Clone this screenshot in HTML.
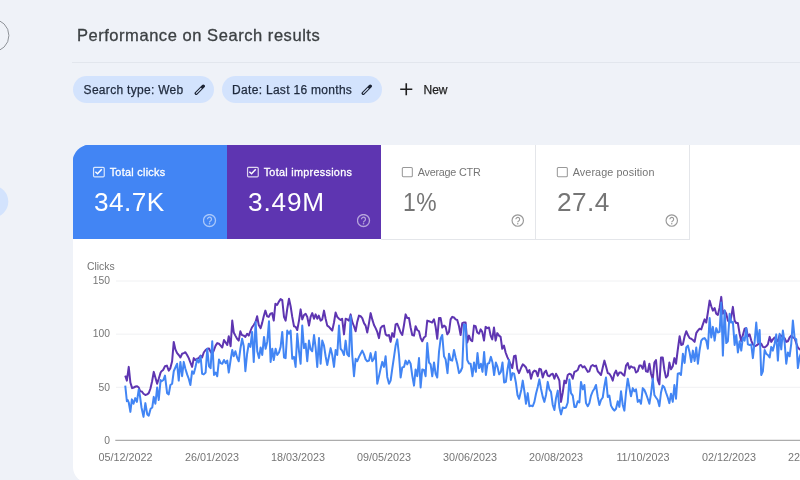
<!DOCTYPE html>
<html><head><meta charset="utf-8">
<style>
*{box-sizing:border-box;margin:0;padding:0}
html,body{width:800px;height:480px;overflow:hidden;background:#eff2f8;font-family:"Liberation Sans",sans-serif;}
.abs{position:absolute}
#title{left:76.9px;top:24.8px;font-size:16.5px;letter-spacing:.55px;color:#3c4043;-webkit-text-stroke:.3px #3c4043;white-space:nowrap;line-height:20px}
#divider{left:72px;top:62px;width:728px;height:1px;background:#e2e6ed}
.chip{top:76px;height:27px;border-radius:14px;background:#d3e3fd;font-size:12px;letter-spacing:.3px;color:#1f2a3d;line-height:27px;white-space:nowrap;-webkit-text-stroke:.25px #1f2a3d}
.chip span{position:absolute;top:1px}
#card{left:72.8px;top:145px;width:760px;height:338.3px;background:#fff;border-radius:16px 0 0 16px;overflow:hidden}
.m{position:absolute;top:0;height:94px;width:154px}
.m .lab{position:absolute;left:36.7px;top:20px;font-size:10.8px;line-height:14px;white-space:nowrap}
.m .val{position:absolute;left:21px;top:41px;font-size:26.2px;letter-spacing:.45px;line-height:32px;white-space:nowrap}
.m svg.cb{position:absolute;left:19px;top:21px}
.m svg.q{position:absolute;left:130px;top:69px}
.w{border-right:1px solid #e4e6ea;border-bottom:1px solid #e4e6ea;height:95px !important;width:155px !important;background:#fff;color:#757575}
.ax{position:absolute;font-size:10.8px;color:#757575;white-space:nowrap;line-height:12px}
#c4 svg.q{left:129px}
#root{position:absolute;left:0;top:0;width:800px;height:480px;will-change:transform}
</style></head><body>
<div id="root">
<div id="title" class="abs">Performance on Search results</div>
<div id="divider" class="abs"></div>
<div class="chip abs" style="left:72.7px;width:141.8px"><span style="left:10.9px">Search type: Web</span>
<svg class="abs" style="left:121.5px;top:8.4px" width="12" height="12" viewBox="0 0 12 12"><path d="M2.2 9.3 L9.3 2.2" stroke="#1b2334" stroke-width="3.3" stroke-linecap="round" fill="none"/><path d="M2.4 9.1 L7.0 4.5" stroke="#d3e3fd" stroke-width="1.2" stroke-linecap="round" fill="none"/></svg></div>
<div class="chip abs" style="left:221.6px;width:160.8px"><span style="left:10.5px">Date: Last 16 months</span>
<svg class="abs" style="left:139.6px;top:8.4px" width="12" height="12" viewBox="0 0 12 12"><path d="M2.2 9.3 L9.3 2.2" stroke="#1b2334" stroke-width="3.3" stroke-linecap="round" fill="none"/><path d="M2.4 9.1 L7.0 4.5" stroke="#d3e3fd" stroke-width="1.2" stroke-linecap="round" fill="none"/></svg></div>
<svg class="abs" style="left:400px;top:83px" width="12.5" height="12.5" viewBox="0 0 12.5 12.5"><path d="M6.25 0.2V12.3M0.2 6.25H12.3" stroke="#1f1f1f" stroke-width="1.6" fill="none"/></svg>
<div class="abs" style="left:423.5px;top:77.1px;font-size:12px;line-height:26.8px;color:#1f1f1f;-webkit-text-stroke:.25px #1f1f1f">New</div>

<div id="card" class="abs">
 <div class="m" style="left:.2px;background:#4285f4;color:#fff;box-shadow:-1px 0 0 #4285f4">
  <svg class="cb" width="14" height="13" viewBox="0 0 14 13"><rect x="1.55" y="1.4" width="10.7" height="9.4" rx="1.1" fill="none" stroke="#fff" stroke-width="1.2" opacity="0.8"/><path d="M3.35 5.7 L5.55 7.7 L9.75 3.2" fill="none" stroke="#fff" stroke-width="1.5"/></svg><div class="lab" style="letter-spacing:.3px;-webkit-text-stroke:.3px #fff">Total clicks</div><div class="val">34.7K</div><svg class="q" width="14" height="14" viewBox="0 0 14 14" opacity="0.55"><circle cx="6.5" cy="6.5" r="6" fill="none" stroke="#fff" stroke-width="1.3"/><path d="M4.5 5.2 a2 2 0 1 1 3.2 1.6 c-.8.5-1.2.9-1.2 1.6" fill="none" stroke="#fff" stroke-width="1.2"/><circle cx="6.5" cy="9.8" r=".8" fill="#fff"/></svg>
 </div>
 <div class="m" style="left:154.2px;background:#5e35b1;color:#fff">
  <svg class="cb" width="14" height="13" viewBox="0 0 14 13"><rect x="1.55" y="1.4" width="10.7" height="9.4" rx="1.1" fill="none" stroke="#fff" stroke-width="1.2" opacity="0.8"/><path d="M3.35 5.7 L5.55 7.7 L9.75 3.2" fill="none" stroke="#fff" stroke-width="1.5"/></svg><div class="lab" style="letter-spacing:.3px;-webkit-text-stroke:.3px #fff">Total impressions</div><div class="val" style="letter-spacing:.85px">3.49M</div><svg class="q" width="14" height="14" viewBox="0 0 14 14" opacity="0.55"><circle cx="6.5" cy="6.5" r="6" fill="none" stroke="#fff" stroke-width="1.3"/><path d="M4.5 5.2 a2 2 0 1 1 3.2 1.6 c-.8.5-1.2.9-1.2 1.6" fill="none" stroke="#fff" stroke-width="1.2"/><circle cx="6.5" cy="9.8" r=".8" fill="#fff"/></svg>
 </div>
 <div class="m w" style="left:308.2px">
  <svg class="cb" width="14" height="13" viewBox="0 0 14 13"><rect x="2.33" y="1.5" width="10" height="9.2" rx="1" fill="none" stroke="#999" stroke-width="1.05"/></svg><div class="lab" style="letter-spacing:-.22px">Average CTR</div><div class="val" style="left:22.2px"><span style="display:inline-block;transform:scaleX(.875);transform-origin:0 0">1%</span></div><svg class="q" width="14" height="14" viewBox="0 0 14 14" opacity="1"><circle cx="6.75" cy="6.5" r="5.7" fill="none" stroke="#999" stroke-width="1.15"/><path d="M4.85 5.3 a1.9 1.9 0 1 1 3.05 1.5 c-.75.5-1.15.85-1.15 1.55" fill="none" stroke="#999" stroke-width="1.1"/><circle cx="6.75" cy="9.7" r=".72" fill="#999"/></svg>
 </div>
 <div class="m w" id="c4" style="left:463.2px;width:154px !important">
  <svg class="cb" width="14" height="13" viewBox="0 0 14 13"><rect x="2.33" y="1.5" width="10" height="9.2" rx="1" fill="none" stroke="#999" stroke-width="1.05"/></svg><div class="lab" style="letter-spacing:.1px">Average position</div><div class="val">27.4</div><svg class="q" width="14" height="14" viewBox="0 0 14 14" opacity="1"><circle cx="6.75" cy="6.5" r="5.7" fill="none" stroke="#999" stroke-width="1.15"/><path d="M4.85 5.3 a1.9 1.9 0 1 1 3.05 1.5 c-.75.5-1.15.85-1.15 1.55" fill="none" stroke="#999" stroke-width="1.1"/><circle cx="6.75" cy="9.7" r=".72" fill="#999"/></svg>
 </div>
</div>

<svg id="chart" class="abs" style="left:0;top:0" width="800" height="480" viewBox="0 0 800 480">
 <circle cx="-7.4" cy="35.5" r="16.3" fill="none" stroke="#8f9399" stroke-width="1"/>
 <rect x="-40" y="185.6" width="48.3" height="32" rx="16" fill="#d3e3fd"/>
 <g stroke="#f0f1f3" stroke-width="1">
  <line x1="116" y1="281" x2="800" y2="281"/><line x1="116" y1="334.15" x2="800" y2="334.15"/><line x1="116" y1="387.3" x2="800" y2="387.3"/>
 </g>
 <line x1="115.3" y1="440.4" x2="800" y2="440.4" stroke="#acacac" stroke-width="1.1"/>
 <polyline id="pp" fill="none" stroke="#5e35b1" stroke-width="2" stroke-linejoin="round" points="125.25,375.62 126.88,380.62 128.75,366.88 130.38,382.5 132.12,388.12 133.75,387.5 135.62,386.5 137.12,386.25 138.75,387.5 140.25,391.25 141.88,391.5 143.5,393.75 145.38,395 147.12,394.38 148.75,393.12 150.38,388.75 152.12,381.25 153.75,371.88 155.38,377.5 157.12,383.75 158.75,378.75 160.62,372.5 161.5,371.25 163.12,370 165,366.25 166.88,365.62 168.75,370.62 170.38,368.12 172.12,361.25 173.75,341.88 175.38,349.38 177.12,353.12 178.75,355 180.38,357.5 182.12,353.75 183.75,353.12 185.38,352.25 187.12,355 188.75,358.12 190.38,362.5 192.12,366.88 193.75,358.12 195.38,360 197.12,358.75 198.75,358.12 200.62,355.62 202.12,357.5 203.75,352.5 205.62,350 207.25,348.75 209,348.5 210.62,351.88 212.25,353.75 214,350 215.62,345.62 217.25,343.12 219,343.75 220.62,345.62 222.25,347.5 224,340 225.62,342.5 227.25,345 228.75,336.25 230.62,346.25 232.25,320.62 233.75,332.5 235.38,335.62 237.12,338.75 238.75,340.62 240.38,331.25 241.88,335 243.75,335.62 245.38,336.88 247.12,333.75 248.75,335.62 250.38,331.25 251.88,327.5 253.75,325 255.62,321.88 257.12,316.25 258.75,325 260.62,328.12 262.12,323.12 263.75,316.25 265.38,310.62 267.12,316.25 268.75,316.88 270.38,313.75 272.12,313.12 273.75,320.62 275.38,303.75 277.12,305 278.75,301.88 280.62,299 282.25,300 284,316.88 285.62,320.62 287.25,308.75 289,298.75 290.62,306.25 292.25,316.88 294,326.25 295.62,326.88 297.25,330 299,320.62 300.62,309.38 302.25,319.38 304,315 305.62,313.75 307.25,316.88 309,325.62 310.62,316.88 312.25,313.12 314,318.75 315.62,314.38 317.25,318.75 318.75,315.62 320.62,320.62 322.25,319.38 324,310.62 325.62,318.75 327.25,325.62 329,326.88 330.62,328.75 332.25,330.62 334,322.5 335.62,312.5 337.25,316.88 339,318.75 340.62,320 342.12,318.75 344,334.38 345.62,318.75 347.25,319.38 349,320.62 350.62,314.38 352.25,321.88 354,326.25 355.62,331.25 357.25,321.88 359,315.62 360.62,316.25 362.25,318.12 364,323.12 365.62,325.62 367.25,332.5 369,323.12 370.62,313.12 372.25,319.38 374,325 375.62,328.12 377.25,331.88 379,338.12 380.62,328.12 382.25,326.25 384,325.62 385.62,334.38 387.25,335.62 389,335 390.62,341.88 392.25,333.12 394,336.88 395.62,324.38 397.25,323.75 399,328.12 400.62,332.5 402.25,335 404,325 405.62,314.38 407.25,318.12 409,318.12 410.62,327.5 412.25,335 414,335.62 415.62,326.25 417.25,330 419,331.25 420.62,338.12 422.25,341.25 424,337.5 425.62,336.25 427.25,320.62 429,321.25 430.62,321.88 432.12,322.5 434,319.38 435.62,326.88 437.25,338.75 439,318.12 440.62,318.12 442.25,327.5 444,325.62 445.62,326.88 447.25,334.38 449,331.88 450.62,319.38 452.25,316.88 454,317.5 455.62,319.38 457.25,320 459,326.25 460.62,335 462.25,323.12 464,322.5 465.62,322.5 467.25,342.5 469,335.62 470.62,340 472.25,341.25 474,325.62 475.62,326.25 477.25,332.5 479,333.75 480.62,329.38 482.25,331.88 484,340.62 485.62,326.88 487.25,328.12 489,327.5 490.62,335.62 492.25,339.38 494,327.5 495.62,340.62 497.25,333.12 499,335.62 500.62,336.88 502.25,348.75 504,345.62 505.62,352.5 507.25,356.88 509,360.62 510.62,364.38 512.25,368.12 514,356.25 515.62,355.62 517.25,368.75 519,373.12 521.25,367.5 522.75,364.38 524.38,365.62 526,367.5 527.75,372.5 529.38,370 531,378.75 532.75,372.5 534.38,370.62 536,371.25 537.75,376.25 539.38,368.75 541,369.38 542.75,377.5 544.38,372.5 546,370.62 547.75,375.62 549.38,376.25 551,374.38 552.75,373.75 554.38,378.75 556,373.75 557.75,376.88 559.38,380.62 561,401.88 562.75,392.5 564.38,380.62 566,383.12 567.75,375 569.38,373.75 571,374.38 572.75,378.75 574.38,371.88 576,371.25 577.75,370 579.38,365.62 581,365 582.75,367.5 584.38,366.25 586,368.75 587.75,371.88 589.38,371.25 591,366.25 592.75,365 594.38,366.25 596,365.62 597.75,371.25 599.38,373.12 601,375 602.75,367.5 604.38,360.62 606,366.25 607.75,373.12 609.38,373.75 611,376.25 612.75,380.62 614.38,373.75 616,370.62 617.75,375.62 619.38,372.5 621,372.5 622.75,374.38 624.38,375.62 626,365.62 627.75,363.12 629.38,368.75 631,366.25 632.75,367.5 634.38,367.5 636,372.5 637.75,371.25 639.38,365.62 641,365.62 642.75,368.75 644.38,361.25 646,371.25 647.75,371.88 649.38,363.75 651,373.75 652.75,379.38 654.38,362.5 656,360 657.75,380 659.38,384.38 661,357.5 662.75,357.5 664.38,370 666,377.5 667.75,375.62 669.38,362.5 671,369.38 672.75,366.25 674.38,358.12 676,363.75 677.75,350 679.62,336.25 681.25,345 682.88,344.38 684.62,336.25 686.25,331.25 687.88,335 689.62,338.12 691.25,338.75 692.88,340 694.62,341.88 696.25,333.12 697.88,330.62 699.62,328.75 701.25,329.38 702.88,324.38 704.62,319.38 706.25,322.5 707.88,312.5 709.62,300.62 711.25,306.25 712.88,310.62 714.62,308.12 716.25,313.75 717.88,315 719.62,307.5 721.25,296.88 722.88,313.75 724.62,310.62 726.25,313.75 727.88,320.62 729.62,322.5 731.25,316.88 732.88,306.88 734.62,320.62 736.25,323.12 737.88,323.12 739.62,333.75 741.25,341.25 742.88,335 744.62,328.75 746.25,328.12 747.88,336.25 749.62,334.38 751.25,340.62 752.88,344.38 754.62,346.25 756.25,345.62 757.88,344.38 759.62,343.12 761.25,343.75 762.88,346.88 764.62,347.5 766.25,346.25 767.88,344.38 769.62,336.88 771.25,341.88 772.88,339.38 774.62,337.5 776.25,339.38 777.88,341.25 779.62,335 781.25,335.62 782.88,337.5 784.62,338.12 786.25,341.88 787.88,341.25 789.62,337.5 791.25,335.62 792.88,337.5 794.62,338.12 796.25,343.12 797.88,347.5 799.62,349.38 801.25,348.75"/>
 <polyline id="pb" fill="none" stroke="#4285f4" stroke-width="2" stroke-linejoin="round" points="125.25,385.62 126.88,401.25 127.75,400 128.75,402.5 130.38,411.88 131.88,399.38 133.5,403.75 135.25,398.12 136.88,401.88 138.75,389.38 140,396.25 141.5,407.5 143.5,416.88 145.38,403.12 147.25,414.38 148.75,415.62 150.62,408.75 152.25,407.5 153.75,396.88 155.38,403.75 157.12,387.5 158.75,400 160.62,380 161.62,381.25 163.38,380 165,375.62 167.12,393.12 168.75,394.38 170.38,385 172.12,383.75 173.75,371.25 175.38,367.5 177.12,363.75 178.75,380.62 180.38,361.88 182.12,376.25 183.75,361.88 185.38,368.75 187.12,374.38 188.75,378.75 190.38,385 192.12,371.25 193.75,373.75 195.38,367.5 197.12,359.38 198.75,362.5 200.62,356.25 202.12,373.75 203.75,374.38 205.62,372.5 207.25,348.75 209,366.25 210.62,368.12 212.25,341.25 214,375 215.62,372.5 217.25,376.25 219,359.38 220.62,363.12 222.25,363.75 224,360 225.62,363.12 227.25,360.62 228.75,372.5 230.62,360 232.25,350 233.75,356.25 235.38,351.25 237.12,357.5 238.75,361.25 240.38,348.75 242.12,338.75 243.75,346.25 245.38,371.25 247.12,353.75 248.75,343.75 250.38,346.88 252.12,331.88 253.75,361.88 255.62,321.88 257.25,351.25 259,358.12 260.62,347.5 262.25,355 264,336.88 265.62,348.75 267.25,341.88 269,321.25 270.62,361.88 272.25,348.75 273.75,360 275.62,348.75 277.25,355 279,352.5 280.62,346.88 282.25,331.88 284,357.5 285.62,358.12 287.25,330.62 289,333.75 290.62,330.62 292.25,358.75 294,356.88 295.62,366.88 297.25,333.75 299,351.25 300.62,363.75 302.25,325.62 304,348.12 305.62,343.75 307.25,361.25 309,340.62 310.62,349.38 312.25,351.25 314,335 315.62,347.5 317.25,366.88 319,338.12 320.62,363.75 322.25,340.62 324,345.62 325.62,356.25 327.25,365 329,356.25 330.62,348.12 332.25,355 334,366.88 335.62,350 337.25,355 339,325.62 340.62,348.75 342.12,350.62 344,355 345.62,340.62 347.25,354.38 349,356.25 350.62,316.25 352.25,355 354,376.25 355.62,358.75 357.25,361.25 359,356.88 360.62,353.75 362.25,350.62 364,354.38 365.62,359.38 367.25,361.25 369,360.62 370.62,353.12 372.25,361.25 374,358.75 375.62,351.88 377.25,383.75 379,376.25 380.62,368.75 382.25,361.88 384,366.88 385.62,356.25 387.25,376.88 389,383.75 390.62,380.62 392.25,368.75 394,356.88 395.62,345.62 397.25,339.38 399,355 400.62,377.5 402.25,367.5 404,366.88 405.62,360.62 407.25,364.38 409,360.62 410.62,363.75 412.25,375.62 414,385.62 415.62,369.38 417.25,376.25 419,358.12 420.62,387.5 422.25,369.38 424,370 425.62,376.25 427.25,343.12 429,362.5 430.62,364.38 432.25,376.25 434,362.5 435.62,373.75 437.25,377.5 439,351.88 440.62,338.75 442.25,335 444,356.25 445.62,359.38 447.5,373.12 449,353.75 450.62,360 452.25,360.62 454,350 455.62,357.5 457.25,363.75 459,373.12 460.62,371.25 462.25,367.5 464,324.38 465.62,325 467.25,360 469,363.5 470.62,363.75 472.5,376.25 474,362.5 475.88,371.88 477.5,353.12 479.12,368.12 480.88,363.75 482.5,371.88 484.12,351.88 485.88,375 487.5,363.75 489.12,363.12 490.88,356.88 492.5,362.5 494.12,375 495.88,362.5 497.5,366.88 499.12,374.38 500.88,371.88 502.5,362.5 504.12,382.5 505.88,381.88 507.5,369.38 509.12,360 510.88,380 512.5,373.12 514.12,373.75 515.88,382.5 517.5,395 519.12,398.75 521.25,390 522.75,380.62 524.38,391.25 526,403.75 527.75,393.12 529.38,406.25 531,405.62 532.75,406.25 534.38,401.88 536,393.75 537.75,386.88 539.38,379.38 541,388.75 542.75,396.88 544.38,401.88 546,395 547.75,381.88 549.38,389.38 551,391.88 552.75,405 554.38,410 556,398.12 557.75,390.62 559.38,407.5 561,414.38 562.75,407.5 564.38,408.12 566,407.5 567.75,402.5 569.38,379.38 571,393.12 572.75,395.62 574.38,406.88 576,406.88 577.75,401.25 579.38,402.5 581,381.88 582.75,389.38 584.38,385 586,403.12 587.75,406.25 589.38,403.12 591,395.62 592.75,391.25 594.38,388.75 596,385 597.75,396.88 599.38,405 601,400 602.75,397.5 604.38,386.25 606,377.5 607.75,396.88 609.38,395.62 611,405.62 612.75,408.75 614.38,410.62 616,408.75 617.75,401.25 619.38,406.88 621,391.25 622.75,405 624.38,410.62 626,392.5 627.75,378.75 629.38,387.5 631,396.25 632.75,388.12 634.38,391.25 636,389.38 637.75,401.88 639.38,400 641,403.75 642.75,388.12 644.38,390 646,393.75 647.75,398.75 649.38,403.75 651,393.75 652.75,378.75 654.38,395 656,397.5 657.75,400 659.38,406.25 661,392.5 662.75,385.62 664.38,387.5 666,392.5 667.75,397.5 669.38,403.12 671,393.75 672.75,401.88 674.38,385 676,398.75 677.75,373.75 679.38,373.12 681,375 682.88,353.75 684.62,363 686.25,347.5 687.88,345.62 689.62,352.5 691.25,362 692.88,350.62 694.62,361 696.25,347.5 697.88,363.75 699.62,350 701.25,340.62 702.88,338.75 704.62,338.12 706.25,340.62 707.88,348.75 709.62,318.12 711.25,337.5 712.88,326.88 714.62,340.62 716.25,328.12 717.88,332.5 719.62,331.88 721.25,302.5 722.88,355.62 724.62,310.62 726.25,343.12 727.88,341.25 729.62,313.75 731.25,322.5 732.88,321.88 734.62,345 736.25,335 737.88,352.5 739.62,341.25 741.25,350.62 742.88,337.5 744.62,340.62 746.25,328.12 747.88,344.38 749.62,345 751.25,344.38 752.88,358.12 754.62,341.88 756.25,322.5 757.88,342.5 759.62,330 761.25,375 762.88,371.25 764.62,350 766.25,353.75 767.88,355 769.62,357.5 771.25,346.88 772.88,350.62 774.62,343.75 776.25,334.38 777.88,360.62 779.62,333.75 781.25,349.38 782.88,330.62 784.62,342.5 786.25,363.75 787.88,352.5 789.62,356.25 791.25,343.75 792.88,320.62 794.62,338.12 796.25,339.38 797.88,368.12 799.62,356.88 801.25,352.5"/>
</svg>
<div class="ax" style="left:87px;top:261px;font-size:10.4px">Clicks</div>
<div class="ax" style="left:80px;top:275px;width:30px;text-align:right;font-size:10.3px">150</div>
<div class="ax" style="left:80px;top:328px;width:30px;text-align:right;font-size:10.3px">100</div>
<div class="ax" style="left:80px;top:382px;width:30px;text-align:right;font-size:10.3px">50</div>
<div class="ax" style="left:80px;top:434.6px;width:30px;text-align:right;font-size:10.3px">0</div>
<div class="ax" style="left:85.5px;top:451px;width:80px;text-align:center">05/12/2022</div>
<div class="ax" style="left:172px;top:451px;width:80px;text-align:center">26/01/2023</div>
<div class="ax" style="left:258px;top:451px;width:80px;text-align:center">18/03/2023</div>
<div class="ax" style="left:344px;top:451px;width:80px;text-align:center">09/05/2023</div>
<div class="ax" style="left:430px;top:451px;width:80px;text-align:center">30/06/2023</div>
<div class="ax" style="left:516px;top:451px;width:80px;text-align:center">20/08/2023</div>
<div class="ax" style="left:603px;top:451px;width:80px;text-align:center">11/10/2023</div>
<div class="ax" style="left:689px;top:451px;width:80px;text-align:center">02/12/2023</div>
<div class="ax" style="left:775px;top:451px;width:80px;text-align:center">22/01/2024</div>

</div>
</body></html>
